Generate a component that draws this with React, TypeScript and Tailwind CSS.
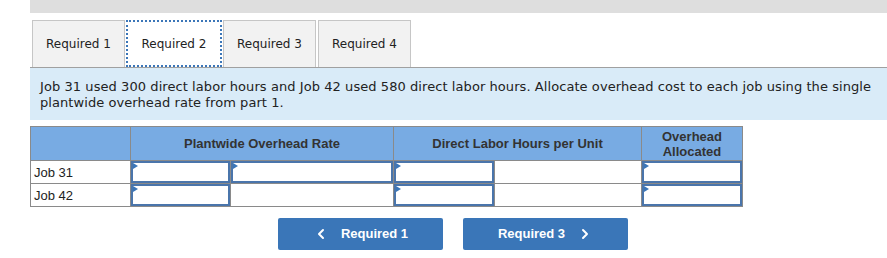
import React from 'react';
import { ChevronLeft, ChevronRight } from 'lucide-react';

const verdana = { fontFamily: '"DejaVu Sans", Verdana, sans-serif' };

function Tab({ label, active, className = '' }: { label: string; active?: boolean; className?: string }) {
  return (
    <div
      className={
        (active
          ? 'flex h-[47px] w-[96px] items-center justify-center border-2 border-dotted border-[#3b76b8] bg-white text-[12px] text-[#222] '
          : 'flex h-[47px] w-[93px] items-center justify-center border border-b-0 border-[#c6c6c6] bg-[#f2f2f2] text-[12px] text-[#222] ') +
        className
      }
    >
      {label}
    </div>
  );
}

function InputCell() {
  return (
    <td className="h-[23px] border border-[#8a8a8a] p-0">
      <div className="relative h-[22px] w-full border-2 border-[#4a75ab] bg-white">
        <span className="absolute left-0 top-0 h-0 w-0 border-y-[3px] border-l-[5px] border-y-transparent border-l-[#3b76b8]" />
      </div>
    </td>
  );
}

function EmptyCell() {
  return <td className="h-[23px] border border-[#8a8a8a] bg-white p-0" />;
}

export default function App() {
  return (
    <div className="h-[258px] w-[887px] bg-white pl-[30px]" style={{ fontFamily: '"Liberation Sans", Arial, sans-serif' }}>
      <div className="h-[13px] bg-[#dedede]" />

      <div className="mt-[7px] flex items-end gap-[1px] pl-[2px]" style={verdana}>
        <Tab label="Required 1" />
        <Tab label="Required 2" active />
        <Tab label="Required 3" />
        <Tab label="Required 4" className="ml-[1px]" />
      </div>

      <div
        className="h-[53px] border-t border-[#a0a0a0] bg-[#d9ebf8] px-[10px] pt-[11px] text-[13px] leading-[16px] tracking-[0.07px] text-[#222]"
        style={verdana}
      >
        Job 31 used 300 direct labor hours and Job 42 used 580 direct labor hours. Allocate overhead cost to each job using the single plantwide overhead rate from part 1.
      </div>

      <table className="mt-[6px] border-collapse text-[13px] text-[#222]">
        <colgroup>
          <col className="w-[100px]" />
          <col className="w-[100px]" />
          <col className="w-[163px]" />
          <col className="w-[101px]" />
          <col className="w-[147px]" />
          <col className="w-[101px]" />
        </colgroup>
        <thead>
          <tr className="h-[34px] bg-[#78abe3] font-bold text-[#333]">
            <th className="border border-[#8a8a8a]" />
            <th colSpan={2} className="border border-[#8a8a8a] font-bold">Plantwide Overhead Rate</th>
            <th colSpan={2} className="border border-[#8a8a8a] font-bold">Direct Labor Hours per Unit</th>
            <th className="border border-[#8a8a8a] font-bold leading-[15px]">
              Overhead
              <br />
              Allocated
            </th>
          </tr>
        </thead>
        <tbody>
          <tr>
            <td className="h-[23px] border border-[#8a8a8a] px-[3px] leading-[15px]">Job 31</td>
            <InputCell />
            <InputCell />
            <InputCell />
            <EmptyCell />
            <InputCell />
          </tr>
          <tr>
            <td className="h-[23px] border border-[#8a8a8a] px-[3px] leading-[15px]">Job 42</td>
            <InputCell />
            <EmptyCell />
            <InputCell />
            <EmptyCell />
            <InputCell />
          </tr>
        </tbody>
      </table>

      <div className="mt-[11px] flex gap-[20px] pl-[248px]">
        <button className="flex h-[32px] w-[165px] items-center justify-center gap-[12px] rounded-[2px] bg-[#3a76b8] text-[13px] font-bold text-white">
          <ChevronLeft className="h-4 w-4" strokeWidth={3} />
          <span>Required 1</span>
        </button>
        <button className="flex h-[32px] w-[165px] items-center justify-center gap-[12px] rounded-[2px] bg-[#3a76b8] text-[13px] font-bold text-white">
          <span>Required 3</span>
          <ChevronRight className="h-4 w-4" strokeWidth={3} />
        </button>
      </div>
    </div>
  );
}
